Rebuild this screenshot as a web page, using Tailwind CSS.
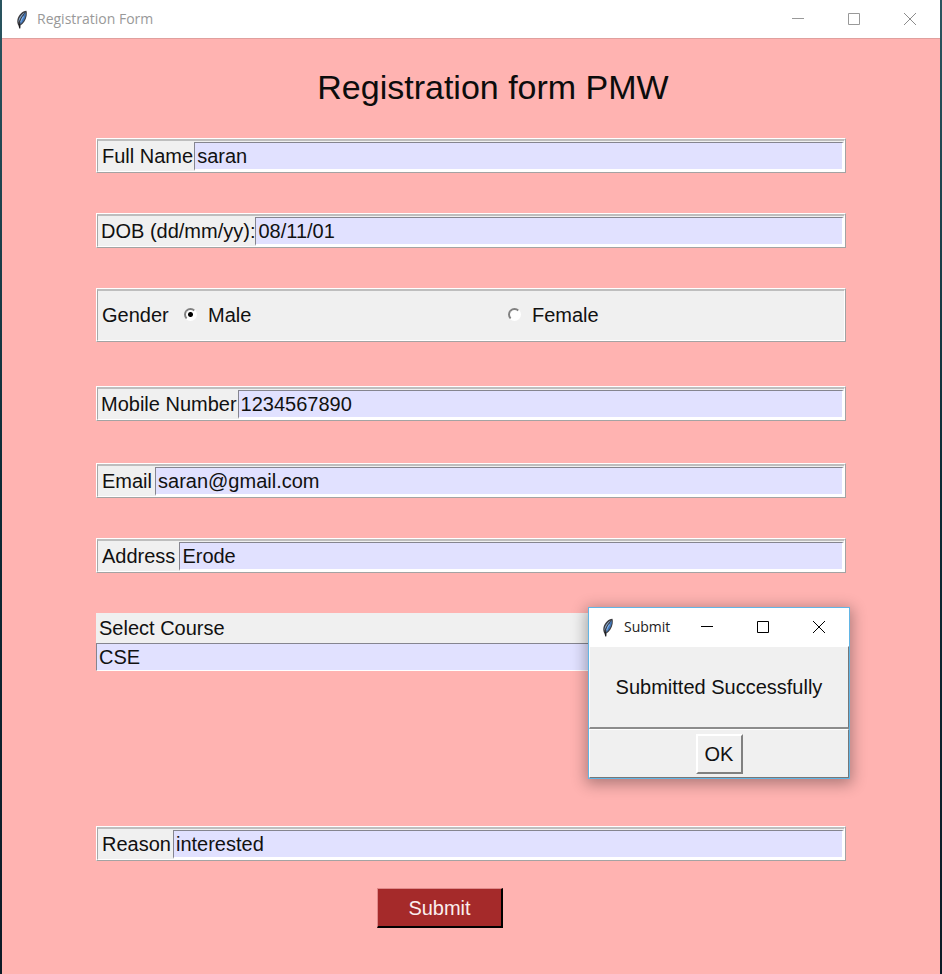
<!DOCTYPE html>
<html lang="en">
<head>
<meta charset="utf-8">
<title>Registration Form</title>
<script src="https://cdn.jsdelivr.net/npm/@tailwindcss/browser@4"></script>
</head>
<body class="min-h-screen bg-linear-to-b from-[#2a5560] via-[#0a2a35] to-[#0b1a26] px-[2px] font-['Liberation_Sans',Arial,sans-serif] text-[20px] leading-6 text-[#111]">
<svg class="hidden" aria-hidden="true">
  <symbol id="feather" viewBox="0 0 12 20">
    <path d="M10.600 .8 C6.500 1 2.400 5 1.200 10 C.7 12.600 1.200 15 2.500 16.600 L3 19.600 L4.200 19.400 L4.400 16.400 C7.600 14 10.200 10.500 10.900 6 C11.200 3.600 11.200 2 10.600 .8Z" fill="#3c3c40"/>
    <path d="M10 2 C7.200 5.500 4.800 10 3.900 15.200 C7 13 9.300 9.500 9.900 5.800Z" fill="#4277b8"/>
    <path d="M8.800 2.500 C5 4.500 2.300 8.500 2.200 13.500 C3.500 9.500 6 5.500 8.800 2.500Z" fill="#8fb4dd"/>
    <path d="M7.600 6.800 C6 9 5 11 4.500 13" fill="none" stroke="#7db0ee" stroke-width="1.200"/>
    <path d="M3 14.500 L3.600 18.500" fill="none" stroke="#1a1a1e" stroke-width="1.200"/>
  </symbol>
</svg>
<div class="flex min-h-screen flex-col bg-[#ffb3b1]">
  <header class="flex h-[38px] items-center bg-white pr-[2px] pl-3 font-['Open_Sans','Noto_Sans',sans-serif] text-[14px] text-[#999]">
    <svg class="mr-[7px] h-[19px] w-4" aria-hidden="true"><use href="#feather"/></svg>
    <span class="grow">Registration Form</span>
    <button type="button" aria-label="Minimize" class="flex h-full w-14 items-center justify-center"><svg width="12" height="12" stroke="#999" fill="none" shape-rendering="crispEdges"><path d="M0 5.500H12"/></svg></button>
    <button type="button" aria-label="Maximize" class="flex h-full w-14 items-center justify-center"><svg width="12" height="12" stroke="#999" fill="none"><path d="M.5 .5H11.500V11.500H.5Z"/></svg></button>
    <button type="button" aria-label="Close" class="flex h-full w-14 items-center justify-center"><svg width="12" height="12" stroke="#8c8c8c" fill="none"><path d="M0 0L12 12M12 0L0 12"/></svg></button>
  </header>
  <main class="grow border-t border-[#e0a09e] px-[94px]">
    <h1 class="pt-[28px] pl-[44px] text-center text-[34px] leading-10 text-[#0c0c0c]">Registration form PMW</h1>
    <form class="flex flex-col pt-[31px]">
      <div class="mb-10 border border-t-white border-r-[#a3a3a3] border-b-[#a3a3a3] border-l-white">
        <div class="flex border border-t-2 border-t-[#bebebe] border-r-white border-b-white border-l-[#a8a8a8] bg-[#f0f0f0] pt-px">
          <label for="name" class="pt-[2px] pr-px pl-1">Full Name</label>
          <input id="name" value="saran" class="h-[29px] min-w-0 grow border border-r-2 border-b-2 border-t-[#85858f] border-r-white border-b-white border-l-[#85858f] bg-[#e1e1ff] pl-[2px] outline-none">
        </div>
      </div>
      <div class="mb-10 border border-t-white border-r-[#a3a3a3] border-b-[#a3a3a3] border-l-white">
        <div class="flex border border-t-2 border-t-[#bebebe] border-r-white border-b-white border-l-[#a8a8a8] bg-[#f0f0f0] pt-px">
          <label for="dob" class="pt-[2px] pl-[3px]">DOB (dd/mm/yy):</label>
          <input id="dob" value="08/11/01" class="h-[29px] min-w-0 grow border border-r-2 border-b-2 border-t-[#85858f] border-r-white border-b-white border-l-[#85858f] bg-[#e1e1ff] pl-[2px] outline-none">
        </div>
      </div>
      <fieldset class="mb-11 border border-t-white border-r-[#a3a3a3] border-b-[#a3a3a3] border-l-white">
        <div class="flex h-[52px] items-center border border-t-2 border-t-[#bebebe] border-r-white border-b-white border-l-[#a8a8a8] bg-[#f0f0f0] pb-[2px] pl-1">
          <span class="w-[82px]">Gender</span>
          <label class="flex w-[324px] items-center gap-[11px]"><input type="radio" name="gender" checked class="size-[13px] appearance-none rounded-full border-2 border-t-[#808080] border-r-white border-b-white border-l-[#808080] bg-[radial-gradient(circle,#000_0_2px,#fff_3px)]">Male</label>
          <label class="flex items-center gap-[11px]"><input type="radio" name="gender" class="size-[13px] appearance-none rounded-full border-2 border-t-[#808080] border-r-white border-b-white border-l-[#808080] bg-white">Female</label>
        </div>
      </fieldset>
      <div class="mb-[42px] border border-t-white border-r-[#a3a3a3] border-b-[#a3a3a3] border-l-white">
        <div class="flex border border-t-2 border-t-[#bebebe] border-r-white border-b-white border-l-[#a8a8a8] bg-[#f0f0f0] pt-px">
          <label for="mobile" class="pt-[2px] pr-px pl-[3px]">Mobile Number</label>
          <input id="mobile" value="1234567890" class="h-[29px] min-w-0 grow border border-r-2 border-b-2 border-t-[#85858f] border-r-white border-b-white border-l-[#85858f] bg-[#e1e1ff] pl-[2px] outline-none">
        </div>
      </div>
      <div class="mb-10 border border-t-white border-r-[#a3a3a3] border-b-[#a3a3a3] border-l-white">
        <div class="flex border border-t-2 border-t-[#bebebe] border-r-white border-b-white border-l-[#a8a8a8] bg-[#f0f0f0] pt-px">
          <label for="email" class="pt-[2px] pr-[3px] pl-1">Email</label>
          <input id="email" value="saran@gmail.com" class="h-[29px] min-w-0 grow border border-r-2 border-b-2 border-t-[#85858f] border-r-white border-b-white border-l-[#85858f] bg-[#e1e1ff] pl-[2px] outline-none">
        </div>
      </div>
      <div class="mb-10 border border-t-white border-r-[#a3a3a3] border-b-[#a3a3a3] border-l-white">
        <div class="flex border border-t-2 border-t-[#bebebe] border-r-white border-b-white border-l-[#a8a8a8] bg-[#f0f0f0] pt-px">
          <label for="address" class="pt-[2px] pr-1 pl-1">Address</label>
          <input id="address" value="Erode" class="h-[29px] min-w-0 grow border border-r-2 border-b-2 border-t-[#85858f] border-r-white border-b-white border-l-[#85858f] bg-[#e1e1ff] pl-[2px] outline-none">
        </div>
      </div>
      <div class="mb-[155px] flex flex-col bg-[#f0f0f0]">
        <label for="course" class="h-[30px] pt-[3px] pl-[3px]">Select Course</label>
        <select id="course" class="h-7 appearance-none border border-t-[#85858f] border-r-white border-b-white border-l-[#85858f] bg-[#e1e1ff] pl-[2px] leading-6 outline-none"><option>CSE</option></select>
      </div>
      <div class="mb-[27px] border border-t-white border-r-[#a3a3a3] border-b-[#a3a3a3] border-l-white">
        <div class="flex border border-t-2 border-t-[#bebebe] border-r-white border-b-white border-l-[#a8a8a8] bg-[#f0f0f0] pt-px">
          <label for="reason" class="pt-[2px] pr-[2px] pl-1">Reason</label>
          <input id="reason" value="interested" class="h-[29px] min-w-0 grow border border-r-2 border-b-2 border-t-[#85858f] border-r-white border-b-white border-l-[#85858f] bg-[#e1e1ff] pl-[2px] outline-none">
        </div>
      </div>
      <button type="button" class="mr-[62px] h-10 w-[126px] self-center border border-r-2 border-b-2 border-t-[#e08a8a] border-r-black border-b-black border-l-[#e08a8a] bg-[#a52a2a] text-[#fbeeee]">Submit</button>
    </form>
  </main>
</div>
<div role="dialog" aria-labelledby="dlg" class="absolute top-[607px] left-[588px] w-[262px] border border-[#62b5e5] bg-[#f0f0f0] shadow-[0_3px_14px_2px_rgba(0,0,0,0.32)]">
  <div class="flex h-[38px] items-center bg-white pr-[2px] pl-[11px] font-['Open_Sans','Noto_Sans',sans-serif] text-[14px] text-[#222]">
    <svg class="mr-2 h-[19px] w-4" aria-hidden="true"><use href="#feather"/></svg>
    <span id="dlg" class="grow">Submit</span>
    <button type="button" aria-label="Minimize" class="flex h-full w-14 items-center justify-center"><svg width="12" height="12" stroke="#000" fill="none" shape-rendering="crispEdges"><path d="M0 5.500H12"/></svg></button>
    <button type="button" aria-label="Maximize" class="flex h-full w-14 items-center justify-center"><svg width="12" height="12" stroke="#000" fill="none"><path d="M.5 .5H11.500V11.500H.5Z"/></svg></button>
    <button type="button" aria-label="Close" class="flex h-full w-14 items-center justify-center"><svg width="12" height="12" stroke="#000" fill="none"><path d="M0 0L12 12M12 0L0 12"/></svg></button>
  </div>
  <p class="flex h-[83px] items-center justify-center border border-t-white border-r-[#777] border-b-2 border-b-[#8c8c8c] border-l-white">Submitted Successfully</p>
  <div class="flex h-[49px] items-center justify-center border border-t-white border-r-[#777] border-b-[#777] border-l-white">
    <button type="button" class="h-10 w-[47px] border-2 border-t-white border-r-[#808080] border-b-[#808080] border-l-white">OK</button>
  </div>
</div>
</body>
</html>
